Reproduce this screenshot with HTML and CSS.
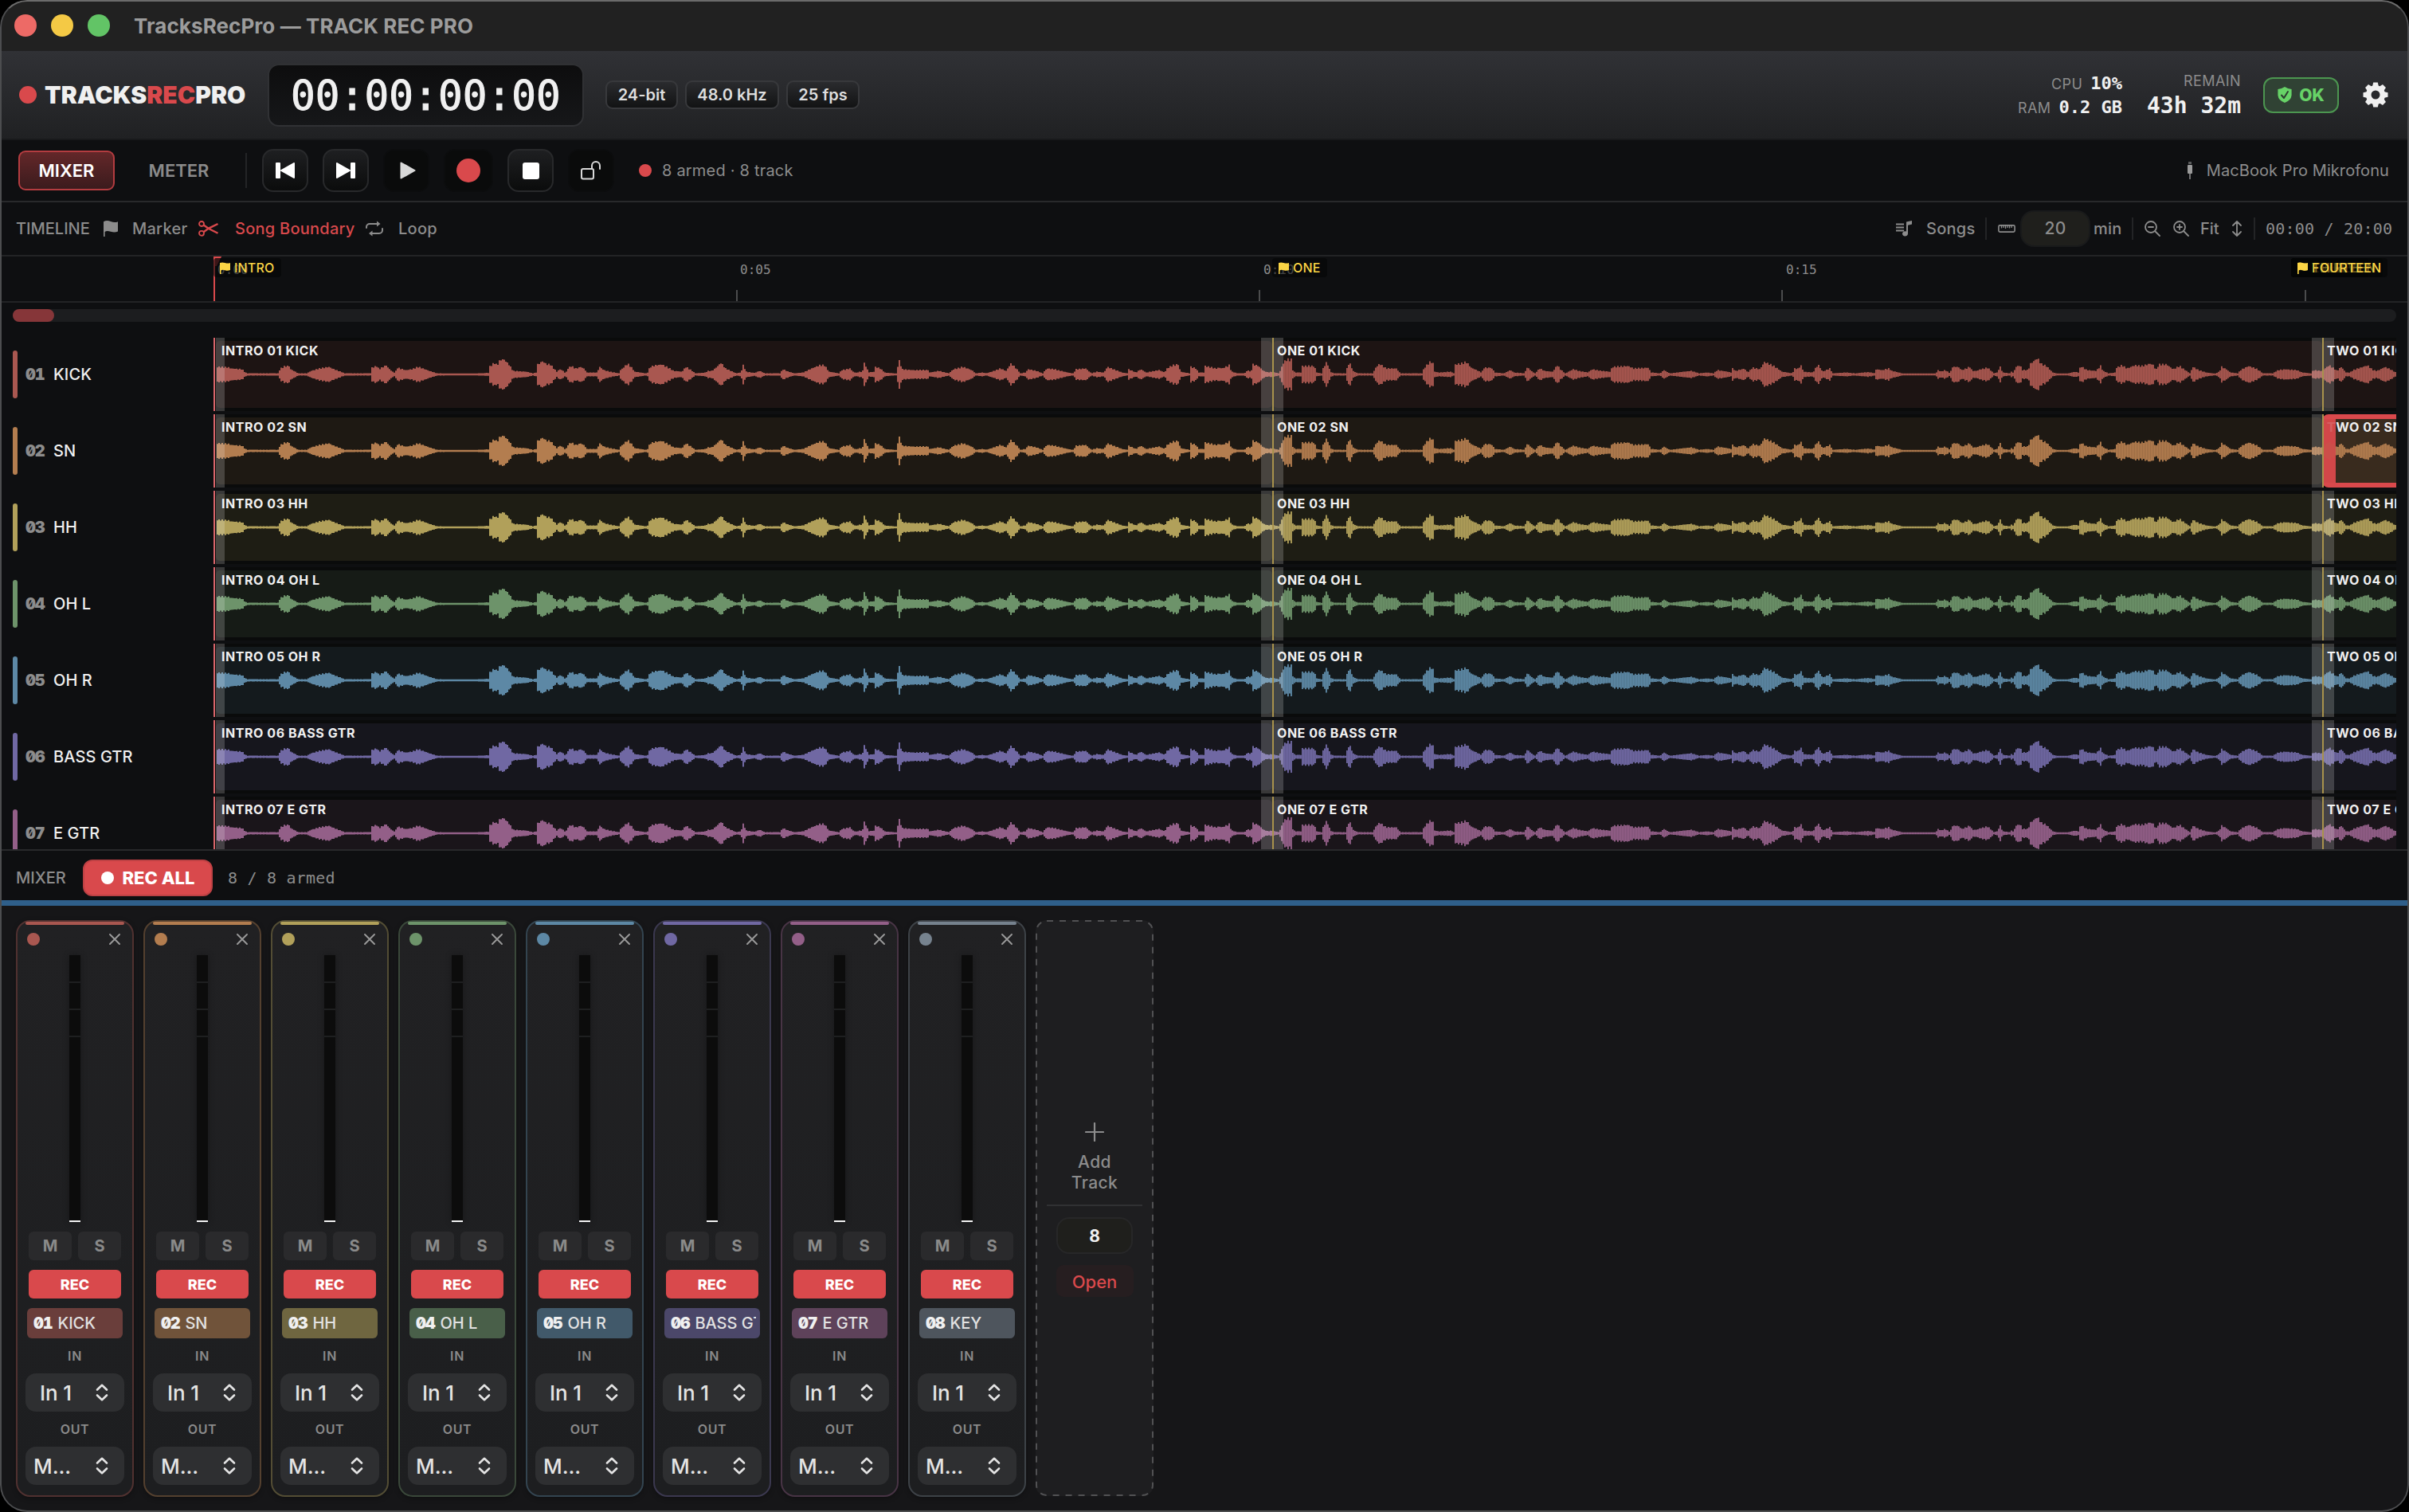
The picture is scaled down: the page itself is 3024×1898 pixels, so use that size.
FILE: index.html
```html
<!DOCTYPE html>
<html lang="en">
<head>
    <meta charset="UTF-8">
    <title>TracksRecPro — TRACK REC PRO</title>
    <link rel="stylesheet" href="styles.css">
</head>
<body>
<div class="window">
    <div class="titlebar">
        <span class="light light-red"></span>
        <span class="light light-yellow"></span>
        <span class="light light-green"></span>
        <span class="window-title">TracksRecPro — TRACK REC PRO</span>
    </div>

    <header class="header">
        <span class="logo-dot"></span>
        <div class="logo">TRACKS<span class="accent">REC</span>PRO</div>
        <div class="timecode">00:00:00:00</div>
        <div class="pills">
            <span class="pill pill-bit">24-bit</span>
            <span class="pill pill-rate">48.0 kHz</span>
            <span class="pill pill-fps">25 fps</span>
        </div>
        <div class="stats">
            <div class="stat-row"><span class="stat-label">CPU</span><span class="stat-value">10%</span></div>
            <div class="stat-row"><span class="stat-label">RAM</span><span class="stat-value">0.2 GB</span></div>
        </div>
        <div class="remain">
            <div class="stat-label">REMAIN</div>
            <div class="remain-value">43h 32m</div>
        </div>
        <div class="status-ok">
            <svg width="18" height="20" viewBox="0 0 18 20"><path d="M9 0 Q13 2.6 17.6 3 V10.5 Q17 17 9 20 Q1 17 .4 10.5 V3 Q5 2.6 9 0Z" fill="#67d267"/><path d="M5 10.5 8 14 13 6" fill="none" stroke="#2c3c2f" stroke-width="2" stroke-linecap="round" stroke-linejoin="round"/></svg>
            <span>OK</span>
        </div>
        <svg class="gear" width="32" height="32" viewBox="-16 -16 32 32">
            <g fill="#f0f0f0">
                <path id="tooth" d="M-4 -10 L-2.8 -15.5 H2.8 L4 -10Z"/>
                <use href="#tooth" transform="rotate(45)"/><use href="#tooth" transform="rotate(90)"/><use href="#tooth" transform="rotate(135)"/>
                <use href="#tooth" transform="rotate(180)"/><use href="#tooth" transform="rotate(225)"/><use href="#tooth" transform="rotate(270)"/><use href="#tooth" transform="rotate(315)"/>
            </g>
            <circle r="8.8" fill="none" stroke="#f0f0f0" stroke-width="6.6"/>
        </svg>
    </header>

    <div class="transport">
        <button class="tab tab-active">MIXER</button>
        <button class="tab">METER</button>
        <span class="divider-tall"></span>
        <div class="transport-buttons">
            <button class="tbtn"><svg width="24" height="20" viewBox="0 0 24 20"><rect width="6" height="20" rx="1" fill="#fff"/><path d="M7 10 23 1V19Z" fill="#fff" stroke="#fff" stroke-width="2" stroke-linejoin="round"/></svg></button>
            <button class="tbtn"><svg width="24" height="20" viewBox="0 0 24 20"><rect x="18" width="6" height="20" rx="1" fill="#fff"/><path d="M17 10 1 1V19Z" fill="#fff" stroke="#fff" stroke-width="2" stroke-linejoin="round"/></svg></button>
            <button class="tbtn tbtn-flat"><svg class="i-play" width="20" height="22" viewBox="0 0 20 22"><path d="M1.5 1.5 18.5 11 1.5 20.5Z" fill="#d8d8d8" stroke="#d8d8d8" stroke-width="2" stroke-linejoin="round"/></svg></button>
            <button class="tbtn tbtn-flat tbtn-wide"><span class="rec-circle"></span></button>
            <button class="tbtn"><span class="stop-square"></span></button>
            <button class="tbtn tbtn-flat"><svg width="26" height="24" viewBox="0 0 26 24" fill="none" stroke="#d8d8d8" stroke-width="2"><rect x="1" y="10" width="15" height="12.5" rx="2"/><path d="M14 10V6a5 5 0 0 1 10 0v4" stroke-linecap="round"/></svg></button>
        </div>
        <span class="armed-dot"></span>
        <span class="armed-text">8 armed · 8 track</span>
        <div class="device">
            <svg width="8" height="22" viewBox="0 0 8 22"><rect x="2" width="4" height="3" fill="#5a5b5c"/><rect x="1" y="4" width="6" height="11" rx="1" fill="#9a9a9a"/><rect x="3.2" y="15" width="1.6" height="7" fill="#8a8a8a"/></svg>
            <span>MacBook Pro Mikrofonu</span>
        </div>
    </div>

    <div class="toolbar">
        <span class="tool-title">TIMELINE</span>
        <svg class="i-flag" width="18" height="20" viewBox="0 0 18 20"><path d="M0 1.2Q4-1 9 1T18 1.2V13.5Q14 15.5 9 13.8T1.6 14V20H0Z" fill="#8c8c8c"/></svg>
        <span class="t-marker">Marker</span>
        <svg class="i-cut" width="26" height="20" viewBox="0 0 26 20" fill="none" stroke="#d9494c" stroke-width="1.8"><circle cx="4" cy="4" r="3"/><circle cx="4" cy="15.8" r="3"/><path d="M6.6 5.6 13 10 24.5 15.8M6.6 14.2 13 9.6 24.5 4" stroke-width="2.4"/></svg>
        <span class="t-boundary">Song Boundary</span>
        <svg class="i-loop" width="22" height="20" viewBox="0 0 22 20" fill="none" stroke="#8c8c8c" stroke-width="2" stroke-linecap="round"><path d="M1 9V8a4 4 0 0 1 4-4h9M21 10v2a4 4 0 0 1-4 4H8"/><path d="M14 .5V7.500L18.500 4ZM8.500 12.500V19.500L4 16Z" fill="#8c8c8c" stroke-width="0"/></svg>
        <span class="t-loop">Loop</span>

        <div class="toolbar-right">
            <svg class="i-songs" width="20" height="20" viewBox="0 0 20 20"><path d="M0 4.500H10M0 8.500H10M0 12.500H10" stroke="#8c8c8c" stroke-width="1.800"/><path d="M13 1.500 20 0V4.500L15 5.800V16.500a3.500 3.200 0 1 1-2-3Z" fill="#8c8c8c"/></svg>
            <span class="t-songs">Songs</span>
            <span class="divider"></span>
            <svg class="i-ruler" width="22" height="10" viewBox="0 0 22 10" fill="none" stroke="#8c8c8c"><rect x=".9" y=".9" width="20.2" height="8.2" rx="1.6" stroke-width="1.600"/><path d="M4.500 1V4.500M7 1V4M9.500 1V5M12 1V4M14.500 1V4.500M17 1V4" stroke-width="1.300"/></svg>
            <span class="minutes">20</span>
            <span class="t-min">min</span>
            <span class="divider"></span>
            <svg class="i-zoom" width="20" height="20" viewBox="0 0 20 20" fill="none" stroke="#8c8c8c" stroke-width="1.800" stroke-linecap="round"><circle cx="8" cy="8" r="7"/><path d="M13 13 19 19M5 8H11"/></svg>
            <svg class="i-zoom i-zoom-in" width="20" height="20" viewBox="0 0 20 20" fill="none" stroke="#8c8c8c" stroke-width="1.800" stroke-linecap="round"><circle cx="8" cy="8" r="7"/><path d="M13 13 19 19M5 8H11M8 5V11"/></svg>
            <span class="t-fit">Fit</span>
            <svg class="i-height" width="12" height="20" viewBox="0 0 12 20" fill="none" stroke="#8c8c8c" stroke-width="1.800" stroke-linecap="round" stroke-linejoin="round"><path d="M6 1V19M1 6 6 1 11 6M1 14 6 19 11 14"/></svg>
            <span class="divider"></span>
            <span class="t-time">00:00 / 20:00</span>
        </div>
    </div>

    <div class="ruler" id="ruler">
        <svg class="playhead" width="10" height="56" viewBox="0 0 10 56"><path d="M0 0H10L4 12H0Z" fill="#7d2b2e"/><path d="M0 0H10L9 2H2V56H0Z" fill="#d9494c"/></svg>
    </div>
    <div class="scroll"><div class="scroll-thumb"></div></div>
    <div class="tracks" id="tracks"></div>

    <div class="mixer-bar">
        <span class="tool-title">MIXER</span>
        <button class="rec-all"><span class="rec-all-dot"></span>REC ALL</button>
        <span class="armed-count">8 / 8 armed</span>
    </div>
    <div class="splitter"></div>

    <div class="mixer">
        <div class="strips" id="strips"></div>
        <div class="add-track">
            <svg class="dashes"><rect x="1" y="1" width="146" height="721" rx="13"/></svg>
            <svg class="plus" width="24" height="24" viewBox="0 0 24 24"><path d="M12 1V23M1 12H23" stroke="#8c8c8c" stroke-width="2.200" stroke-linecap="round"/></svg>
            <div class="add-label">Add<br>Track</div>
            <div class="add-line"></div>
            <div class="add-count">8</div>
            <div class="add-open">Open</div>
        </div>
    </div>
</div>
<script src="app.js"></script>
</body>
</html>
```
FILE: styles.css
```css
* {
    box-sizing: border-box;
}
body {
    margin: 0;
    background: #000;
    font-family: Inter, "Liberation Sans", sans-serif;
    color: #f0f0f0;
}
button {
    font-family: inherit;
    padding: 0;
    margin: 0;
}
svg {
    display: block;
    flex: none;
}
.window {
    position: relative;
    width: 3024px;
    height: 1898px;
    background: #0e0f11;
    border-radius: 34px;
    overflow: hidden;
    display: flex;
    flex-direction: column;
    white-space: nowrap;
}
.window::after {
    content: "";
    position: absolute;
    inset: 0;
    border: 2px solid #4c4d4f;
    border-top-color: #6b6b6b;
    border-radius: 34px;
}
.window > div, .window > header {
    flex: none;
}

/* title bar */
.titlebar {
    height: 64px;
    background: #212121;
    display: flex;
    align-items: center;
    padding-left: 18px;
}
.light {
    width: 28px;
    height: 28px;
    border-radius: 50%;
    margin-right: 18px;
}
.light-red { background: #ed6a66; }
.light-yellow { background: #f4c945; }
.light-green { background: #62c466; }
.window-title {
    margin-left: 12px;
    font-size: 26px;
    font-weight: 700;
    letter-spacing: 0.08px;
    color: #9c9c9c;
}

/* header */
.header {
    height: 112px;
    background: linear-gradient(#303135, #202123);
    border-bottom: 2px solid #18191b;
    display: flex;
    align-items: center;
    padding: 0 26px 0 24px;
}
.logo-dot {
    width: 22px;
    height: 22px;
    border-radius: 50%;
    background: #d9494c;
}
.logo {
    width: 280px;
    margin-left: 10px;
    font-size: 30px;
    font-weight: 900;
    letter-spacing: 0.05px;
}
.accent {
    color: #d9494c;
}
.timecode {
    width: 397px;
    height: 79px;
    border: 2px solid #303134;
    border-radius: 14px;
    background: linear-gradient(#0d0d0e, #161719);
    font-family: "DejaVu Sans Mono", monospace;
    font-size: 51px;
    letter-spacing: 0.1px;
    line-height: 77px;
    text-align: center;
    -webkit-text-stroke: 1px #f0f0f0;
}
.pills {
    display: flex;
    gap: 9px;
    margin-left: 27px;
}
.pill {
    height: 36px;
    border: 2px solid #38393c;
    border-radius: 9px;
    background: linear-gradient(#2a2b2e, #121314);
    font-size: 20px;
    font-weight: 600;
    line-height: 32px;
    text-align: center;
    color: #dedede;
}
.pill-bit { width: 91px; }
.pill-rate { width: 118px; }
.pill-fps { width: 92px; }
.stats {
    margin-left: auto;
    width: 140px;
    margin-right: 29px;
    padding-top: 1px;
}
.stat-row {
    display: flex;
    justify-content: flex-end;
    align-items: baseline;
    gap: 10px;
    height: 30px;
    line-height: 30px;
}
.stat-label {
    font-size: 18px;
    letter-spacing: 0.4px;
    color: #8c8c8c;
}
.stat-value {
    font-family: "DejaVu Sans Mono", monospace;
    font-size: 22px;
    font-weight: 700;
}
.remain {
    text-align: right;
    width: 120px;
    margin-right: 28px;
    padding-top: 5px;
}
.remain .stat-label {
    line-height: 22px;
}
.remain-value {
    font-family: "DejaVu Sans Mono", monospace;
    font-size: 28px;
    font-weight: 700;
    line-height: 39px;
}
.status-ok {
    width: 95px;
    height: 45px;
    border: 2px solid #4c9650;
    border-radius: 12px;
    background: #304234;
    color: #67d267;
    font-size: 21px;
    font-weight: 800;
    display: flex;
    align-items: center;
    justify-content: center;
    gap: 9px;
    margin-right: 30px;
}

/* transport */
.transport {
    height: 78px;
    border-bottom: 2px solid #28292b;
    display: flex;
    align-items: center;
    padding: 0 25px 0 23px;
}
.tab {
    width: 121px;
    height: 50px;
    border: 2px solid transparent;
    border-radius: 9px;
    background: none;
    font-size: 22px;
    font-weight: 600;
    color: #8a8a8a;
    margin-right: 20px;
}
.tab-active {
    border-color: #b33c40;
    background: linear-gradient(#632729, #3b1b1d);
    color: #fff;
}
.divider-tall {
    width: 2px;
    height: 44px;
    background: #232426;
    margin: 0 19px 0 3px;
}
.transport-buttons {
    display: flex;
    gap: 18px;
}
.tbtn {
    width: 58px;
    height: 54px;
    border: 2px solid #28292b;
    border-radius: 14px;
    background: linear-gradient(#1e1f21, #0b0c0c);
    display: flex;
    align-items: center;
    justify-content: center;
}
.tbtn-flat {
    border-color: #0c0d0e;
    background: #0a0b0b;
}
.tbtn-wide {
    width: 62px;
}
.i-play {
    margin-left: 3px;
}
.rec-circle {
    width: 30px;
    height: 30px;
    border-radius: 50%;
    background: #d9494c;
}
.stop-square {
    width: 21px;
    height: 21px;
    border-radius: 3px;
    background: #fff;
}
.armed-dot {
    width: 16px;
    height: 16px;
    border-radius: 50%;
    background: #d9494c;
    margin: 0 13px 0 31px;
}
.armed-text, .device {
    font-size: 20px;
    letter-spacing: 0.2px;
    color: #8c8c8c;
}
.device {
    margin-left: auto;
    display: flex;
    align-items: center;
    gap: 17px;
    letter-spacing: 0.08px;
}

/* timeline toolbar */
.toolbar {
    height: 68px;
    border-bottom: 2px solid #222325;
    display: flex;
    align-items: center;
    padding: 0 21px 0 20px;
    font-size: 20px;
    font-weight: 500;
    letter-spacing: 0.25px;
    color: #8c8c8c;
}
.tool-title {
    font-size: 20px;
    font-weight: 500;
    color: #8c8c8c;
    letter-spacing: 0;
}
.toolbar .tool-title { width: 110px; }
.t-marker { width: 83px; margin-left: 18px; }
.t-boundary { width: 164px; margin-left: 20px; color: #d9494c; }
.t-loop { margin-left: 19px; }
.toolbar-right {
    margin-left: auto;
    display: flex;
    align-items: center;
}
.t-songs { width: 74px; margin-left: 18px; }
.divider {
    width: 2px;
    height: 28px;
    background: #232426;
}
.i-ruler { margin-left: 14px; }
.minutes {
    width: 88px;
    height: 46px;
    margin-left: 6px;
    border: 2px solid #191a1b;
    border-radius: 17px;
    background: #1f1f1c;
    font-size: 21px;
    line-height: 42px;
    text-align: center;
}
.t-min { width: 48px; margin-left: 4px; }
.i-zoom { margin-left: 14px; }
.i-zoom-in { margin-left: 16px; }
.t-fit { width: 24px; margin-left: 14px; letter-spacing: 0; }
.i-height { margin: 0 15px 0 16px; }
.t-time {
    width: 159px;
    margin-left: 13px;
    font-family: "DejaVu Sans Mono", monospace;
    font-weight: 400;
    letter-spacing: 0.2px;
}

/* ruler */
.ruler {
    position: relative;
    height: 58px;
    border-bottom: 2px solid #222325;
}
.tick {
    position: absolute;
    bottom: 0;
    width: 2px;
    height: 14px;
    background: #4b4c4d;
}
.tick-label {
    position: absolute;
    top: 7px;
    font-family: "DejaVu Sans Mono", monospace;
    font-size: 16px;
    line-height: 20px;
    color: #8c8c8c;
}
.playhead {
    position: absolute;
    left: 268px;
    top: 0;
}
.flag-tag {
    position: absolute;
    top: 2px;
    height: 24px;
    border-radius: 4px;
    background: rgba(4, 5, 5, 0.55);
    display: flex;
    align-items: center;
    gap: 5px;
    padding: 0 8px;
    font-size: 16px;
    font-weight: 500;
    letter-spacing: 0.2px;
    color: #fbd545;
}

.scroll {
    height: 16px;
    margin: 8px 16px 20px;
    border-radius: 8px;
    background: #1c1d1f;
}
.scroll-thumb {
    width: 52px;
    height: 16px;
    border-radius: 8px;
    background: #863639;
}

/* tracks */
.tracks {
    height: 642px;
    overflow: hidden;
    padding: 0 16px;
}
.track {
    height: 92px;
    margin-bottom: 4px;
    display: flex;
    align-items: center;
}
.track-color {
    width: 6px;
    height: 60px;
    border-radius: 3px;
    background: var(--c);
}
.num {
    font-size: 20px;
    font-weight: 900;
    font-feature-settings: "tnum", "zero";
    letter-spacing: -1.2px;
}
.track .num {
    width: 35px;
    margin-left: 10px;
    color: #8c8c8c;
}
.track-name {
    width: 201px;
    font-size: 20px;
    font-weight: 500;
    letter-spacing: 0.1px;
}
.lane {
    position: relative;
    flex: 1;
    height: 92px;
    background: #0a0b0b;
    overflow: hidden;
}
.clip {
    position: absolute;
    top: 4px;
    height: 84px;
    border-radius: 5px;
    background: color-mix(in srgb, var(--c) 12%, #0a0b0b);
}
.clip-selected {
    top: 0;
    height: 92px;
    border: 6px solid #d9494c;
    border-left-width: 17px;
    border-radius: 8px 0 0 8px;
    background: color-mix(in srgb, var(--c) 28%, #0a0b0b);
}
.wave {
    position: absolute;
    left: 0;
    top: 0;
    fill: var(--c);
}
.fade {
    position: absolute;
    top: 0;
    height: 92px;
    background: rgba(255, 255, 255, 0.19);
}
.boundary {
    position: absolute;
    top: 0;
    width: 2px;
    height: 92px;
    background: #a8924c;
}
.boundary-start {
    background: #d9656a;
}
.handle {
    position: absolute;
    top: 6px;
    left: 2649px;
    width: 15px;
    height: 80px;
    background: rgba(208, 70, 73, 0.85);
}
.clip-label {
    position: absolute;
    top: 7px;
    font-size: 16px;
    font-weight: 700;
    letter-spacing: 0.55px;
    line-height: 19px;
}

/* mixer bar */
.mixer-bar {
    height: 64px;
    border-top: 2px solid #28292b;
    display: flex;
    align-items: center;
    padding: 6px 0 0 20px;
}
.rec-all {
    width: 163px;
    height: 46px;
    margin: 0 19px 1px 20px;
    border: 2px solid #bd4144;
    border-radius: 12px;
    background: #d9494c;
    color: #fff;
    font-size: 22px;
    font-weight: 800;
    display: flex;
    align-items: center;
    justify-content: center;
    gap: 11px;
}
.mixer-bar .tool-title {
    width: 64px;
}
.rec-all-dot {
    width: 16px;
    height: 16px;
    border-radius: 50%;
    background: #fff;
}
.armed-count {
    font-family: "DejaVu Sans Mono", monospace;
    font-size: 20px;
    letter-spacing: 0.2px;
    color: #8c8c8c;
}
.splitter {
    height: 7px;
    background: #2f5f8a;
}

/* mixer */
.mixer {
    height: 761px;
    background: #161618;
    padding: 18px 20px;
    display: flex;
    gap: 12px;
}
.strips {
    display: flex;
    gap: 12px;
}
.strip {
    width: 148px;
    height: 724px;
    border: 2px solid color-mix(in srgb, var(--c) 38%, #1a1a1c);
    border-radius: 18px;
    background: linear-gradient(#212123, #1d1e20);
    box-shadow: 0 2px 6px rgba(0, 0, 0, 0.3);
    padding: 0 10px;
    display: flex;
    flex-direction: column;
    align-items: center;
}
.strip-top {
    width: 124px;
    height: 4px;
    border-radius: 2px;
    background: var(--c);
}
.strip-head {
    width: 120px;
    padding-right: 3px;
    display: flex;
    justify-content: space-between;
    align-items: center;
    height: 16px;
    margin-top: 10px;
}
.strip-dot {
    width: 16px;
    height: 16px;
    border-radius: 50%;
    background: var(--c);
}
.meter {
    width: 14px;
    height: 335px;
    margin-top: 12px;
    background: #0c0c0c;
    border-bottom: 2px solid #f4f4f4;
    padding-top: 33px;
    box-shadow: 0 0 8px rgba(0, 0, 0, 0.3);
}
.meter i {
    display: block;
    height: 2px;
    margin-bottom: 32px;
    background: #1e1f20;
}
.ms {
    display: flex;
    gap: 8px;
    margin-top: 12px;
}
.ms span {
    width: 54px;
    height: 36px;
    border-radius: 6px;
    background: #2a2a2c;
    font-size: 20px;
    font-weight: 700;
    line-height: 36px;
    text-align: center;
    color: #8a8a8a;
}
.rec {
    width: 116px;
    height: 36px;
    margin-top: 12px;
    border-radius: 6px;
    background: #d9494c;
    font-size: 18px;
    font-weight: 800;
    line-height: 37px;
    text-align: center;
    color: #fff;
}
.chip {
    width: 120px;
    height: 38px;
    margin-top: 12px;
    padding: 0 5px 0 8px;
    border-radius: 6px;
    background: color-mix(in srgb, var(--c) 55%, #1e1f21);
    line-height: 38px;
    display: flex;
    align-items: center;
    gap: 7px;
}
.chip-name {
    overflow: hidden;
    font-size: 20px;
    font-weight: 500;
    color: #e2e2e2;
}
.io-label {
    height: 44px;
    font-size: 16px;
    font-weight: 600;
    letter-spacing: 0.6px;
    line-height: 45px;
    color: #8a8a8a;
}
.select {
    width: 124px;
    height: 48px;
    border-radius: 13px;
    background: #2e2f31;
    display: flex;
    align-items: center;
    justify-content: space-between;
    padding: 0 20px 0 18px;
    font-size: 26px;
    font-weight: 500;
    letter-spacing: -0.1px;
    color: #e4e4e4;
}
.select-out {
    padding-left: 10px;
}
.add-track {
    position: relative;
    width: 148px;
    height: 723px;
    border-radius: 14px;
    background: #1e1e20;
    display: flex;
    flex-direction: column;
    align-items: center;
}
.dashes {
    position: absolute;
    left: 0;
    top: 0;
    width: 148px;
    height: 723px;
    fill: none;
    stroke: #515153;
    stroke-width: 2;
    stroke-dasharray: 8 8;
}
.plus {
    margin-top: 254px;
}
.add-label {
    margin-top: 13px;
    font-size: 21px;
    font-weight: 500;
    line-height: 26px;
    letter-spacing: 0.4px;
    text-align: center;
    color: #8c8c8c;
}
.add-line {
    width: 120px;
    height: 2px;
    margin-top: 14px;
    background: #303133;
}
.add-count {
    width: 96px;
    height: 46px;
    margin-top: 14px;
    border: 2px solid #272728;
    border-radius: 16px;
    background: #1f1f1c;
    font-size: 21px;
    font-weight: 700;
    line-height: 43px;
    text-align: center;
}
.add-open {
    width: 97px;
    height: 40px;
    margin-top: 14px;
    border-radius: 9px;
    background: #261e20;
    font-size: 22px;
    font-weight: 500;
    line-height: 42px;
    text-align: center;
    color: #d9494c;
}
```
FILE: app.js
```js
const tracks = [
    ["01", "KICK", "#a95750"],
    ["02", "SN", "#b37d4f"],
    ["03", "HH", "#b1a05a"],
    ["04", "OH L", "#6d936a"],
    ["05", "OH R", "#5d88a5"],
    ["06", "BASS GTR", "#7068a3"],
    ["07", "E GTR", "#935f88"],
    ["08", "KEY", "#76828e"]
];

// timeline geometry
const ORIGIN = 268;
const FIVE_SEC = 656.3;

// peak envelope: x, half height
const peaks = `270,9 285,8.5 290,7 303,6 306,3 309,1 348,1 351,7 357,10 362,10 364,6 370,3 373,1 384,1 390,4 400,7 412,9 416,7 424,4 432,1 464,1 465,8 472,10 475,6 478,8 484,11 487,7 493,2 495,2 498,8 508,5 516,6 524,9 530,7 538,4 548,1 588,.5 612,1.5 613,9 620,14 623,11 627,18 632,18 638,12 643,4 660,3 668,1 672,2 674,12 680,16 686,12 690,12 695,6 698,3 702,6 706,4 709,1 712,7 716,10 722,7 728,9 732,7 736,2 748,2 752,9 757,5 765,3 776,1 778,5 787,13 793,7 796,3 810,1 812,2 815,9 822,11 830,12 838,8 845,4 855,3 860,9 865,6 872,1 885,2 887,4 893,4 900,10
904,14 910,7 923,1 929,2 932,11 936,3 946,1.5 953,4 959,1 978,1 982,6 989,3 996,1 1007,2 1020,8 1028,11 1034,11 1040,3 1052,1 1056,5 1066,7 1071,2 1076,2 1079,4 1081,1 1084,13 1087,9 1089,2 1096,3 1098,9 1104,7 1110,2 1124,.7 1126,10 1128,16 1132,6 1145,5 1164,5 1166,2 1178,4 1190,1 1196,6 1208,9 1219,5 1224,1 1232,2 1237,1 1247,4 1255,7 1262,4 1266,10 1268,13 1273,9 1280,1 1286,2 1290,6 1300,4 1308,1 1313,7 1323,6 1339,2 1346,1 1350,6 1362,7 1369,1 1376,3 1385,2 1389,9 1397,6 1408,2 1414,1 1416,6 1425,2 1431,6 1438,2 1454,5 1461,2 1464,7 1471,11 1478,12 1481,3 1492,1 1494,9 1501,7 1503,2 1510,2 1512,10 1525,7 1530,8 1533,7 1542,11 1545,3 1553,1 1561,1 1566,5 1569,2 1572,12 1579,10 1585,4 1591,2 1596,3 1604,1
1606,4 1610,14 1614,18 1620,18 1622,5 1625,2 1632,2 1633,10 1649,10 1652,2 1658,1 1661,10 1665,15 1669,3 1674,1 1688,1 1692,13 1695,12 1697,4 1704,1 1723,1 1725,7 1731,13 1739,7 1752,7 1757,1 1784,1 1787,8 1794,15 1798,14 1800,3 1805,2 1820,3 1824,1 1826,12 1833,13 1840,15 1846,8 1859,2 1862,8 1871,8 1876,2 1887,1 1895,5 1900,2 1912,1 1917,9 1920,5 1926,1 1932,7 1938,4 1948,3 1954,11 1958,6 1964,1 1974,6 1981,4 1992,2 1998,6 2009,4 2020,3 2023,9 2043,10 2050,7 2068,8 2072,2 2083,1 2088,5 2095,1 2122,4 2132,1 2142,2 2150,1 2155,5 2168,3 2172,2 2174,7 2178,4 2189,7 2193,2 2199,8 2208,6 2214,15 2224,11 2229,8 2236,3 2249,1 2252,7 2257,7 2260,11 2263,3 2275,2 2279,9 2282,11 2287,3 2296,7 2300,1
2316,2 2328,1 2344,2.5 2353,1 2354,6 2362,5 2370,7 2374,4 2383,2 2388,.7 2429,.7 2432,5 2435,3 2441,5 2447,1 2450,9 2457,9 2462,5 2472,9 2475,4 2480,4 2485,6 2494,8 2499,4 2502,1 2506,2 2510,9 2513,2 2522,1 2523,4 2527,1 2529,9 2535,11 2538,5 2545,5 2548,13 2553,17 2557,20 2561,13 2568,10 2576,2 2582,.7 2595,.7 2603,3 2608,2 2611,10 2619,5 2630,4 2636,10 2639,4 2646,1 2655,2 2656,8 2663,11 2669,7 2679,11 2688,10 2698,13 2703,11 2705,4 2709,12 2719,12 2727,6 2735,10 2741,6 2748,1 2752,9 2759,5 2769,2 2780,.7 2785,3 2788,9 2794,6 2799,2 2808,1 2813,6 2822,10 2831,7 2840,1 2852,1 2859,5 2868,6 2882,5 2889,2 2900,1 2903,5 2914,4 2916,6 2923,11 2929,7 2933,4 2938,9 2944,2 2949,2 2953,5 2965,9 2971,11 2978,5 2983,4 2993,9 3000,6 3008,1`
    .split(/\s+/).map(p => p.split(",").map(Number));

function wavePath() {
    let d = "", k = 0;
    for (let x = 272; x < 3008; x += 2) {
        while (k < peaks.length - 2 && peaks[k + 1][0] <= x) k++;
        const [x0, h0] = peaks[k], [x1, h1] = peaks[k + 1];
        let h = h0 + (h1 - h0) * (x - x0) / (x1 - x0);
        // small ripple so the slopes are not perfectly straight
        h *= 1 + 0.1 * Math.sin(x * 1.7);
        h = Math.max(1.2, h + 0.4);
        const w = x < 1598 ? 2 : 1.85;
        d += `M${x - ORIGIN} ${(46 - h).toFixed(1)}h${w}v${(2 * h).toFixed(1)}h-${w}z`;
    }
    return d;
}

const wave = wavePath();
document.getElementById("tracks").innerHTML = tracks.slice(0, 7).map(([num, name, color], i) => `
    <div class="track" style="--c: ${color}">
        <span class="track-color"></span>
        <span class="num">${num}</span>
        <span class="track-name">${name}</span>
        <div class="lane">
            <div class="clip" style="left: 3px; width: 1326px"></div>
            <div class="clip" style="left: 1330px; width: 1317px"></div>
            <div class="clip ${i === 1 ? "clip-selected" : ""}" style="left: 2647px; width: 110px"></div>
            <svg class="wave" width="2740" height="92"><path d="${wave}"/></svg>
            <div class="clip-label" style="left: 10px">INTRO ${num} ${name}</div>
            <div class="clip-label" style="left: 1335px">ONE ${num} ${name}</div>
            <div class="clip-label" style="left: 2653px">TWO ${num} ${name}</div>
            <div class="fade" style="left: 3px; width: 11px"></div>
            <div class="fade" style="left: 1315px; width: 28px"></div>
            <div class="fade" style="left: 2634px; width: ${i === 1 ? 13 : 28}px"></div>
            ${i === 1 ? '<div class="handle"></div>' : ""}
            <div class="boundary boundary-start" style="left: 0"></div>
            <div class="boundary" style="left: 1329px"></div>
            <div class="boundary" style="left: 2647px"></div>
        </div>
    </div>`).join("");

const flag = '<svg width="13" height="15" viewBox="0 0 13 15"><path d="M0 1Q3 0 6.500 1T13 1V10Q10 11.500 6.500 10.300T1.500 10.500V15H0Z" fill="#fbd545"/></svg>';
const ruler = document.getElementById("ruler");
let html = "";
["0:00", "0:05", "0:10", "0:15", ""].forEach((label, i) => {
    const x = ORIGIN + i * FIVE_SEC;
    if (i) html += `<div class="tick" style="left: ${Math.round(x - 0.5)}px"></div>`;
    html += `<div class="tick-label" style="left: ${Math.round(x + 5)}px">${label}</div>`;
});
// markers past the visible range pile up at the right edge
[["INTRO", 268], ["ONE", 1597], ["ELEVEN", 2876], ["TWELVE", 2876], ["THIRTEEN", 2876], ["FOURTEEN", 2876]].forEach(([name, x]) => {
    html += `<div class="flag-tag" style="left: ${x}px">${flag}${name}</div>`;
});
ruler.insertAdjacentHTML("beforeend", html);

const chevrons = '<svg width="16" height="22" viewBox="0 0 16 22" fill="none" stroke="#e4e4e4" stroke-width="2.600" stroke-linecap="round" stroke-linejoin="round"><path d="M2 7.500 8 1.800 14 7.500M2 14.500 8 20.200 14 14.500"/></svg>';
document.getElementById("strips").innerHTML = tracks.map(([num, name, color]) => `
    <div class="strip" style="--c: ${color}">
        <div class="strip-top"></div>
        <div class="strip-head">
            <span class="strip-dot"></span>
            <svg width="14" height="14" viewBox="0 0 14 14"><path d="M1 1 13 13M13 1 1 13" stroke="#9a9a9a" stroke-width="1.900" stroke-linecap="round"/></svg>
        </div>
        <div class="meter"><i></i><i></i><i></i></div>
        <div class="ms"><span>M</span><span>S</span></div>
        <div class="rec">REC</div>
        <div class="chip"><span class="num">${num}</span><span class="chip-name">${name}</span></div>
        <div class="io-label">IN</div>
        <div class="select">In 1${chevrons}</div>
        <div class="io-label">OUT</div>
        <div class="select select-out">M...${chevrons}</div>
    </div>`).join("");
```
